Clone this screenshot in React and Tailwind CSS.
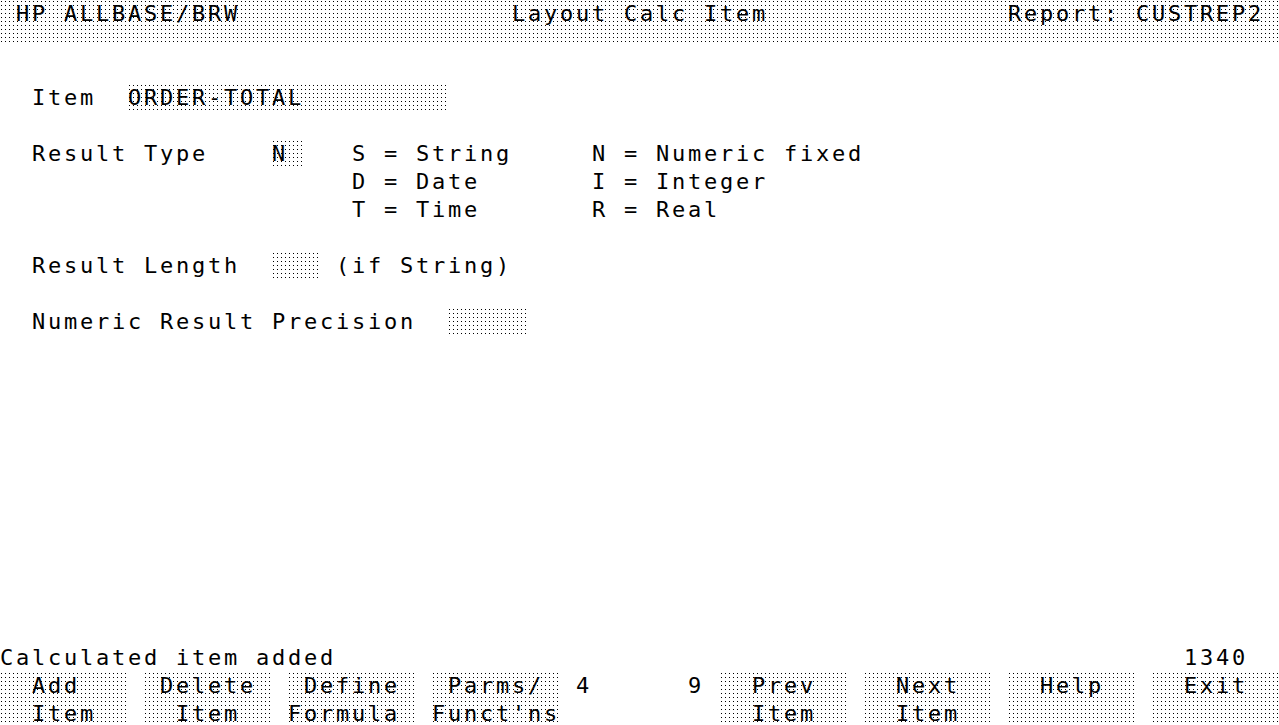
import React from 'react';

// terminal screen: 80 cols x 16px, 26 rows of 28px (last row clipped)
const at = (parts) => {
  let s = '';
  for (const [col, text] of parts) s = s.padEnd(col) + text;
  return s;
};

const dots =
  'bg-[image:conic-gradient(from_270deg_at_1px_1px,#000_90deg,transparent_0)] bg-[length:4px_4px] bg-[position:1px_1px]';

function Field({ children }) {
  return (
    <span className={`inline-block align-top h-[26px] leading-[28px] ${dots}`}>{children}</span>
  );
}

function Row({ children }) {
  return <div className="h-[28px] shrink-0 leading-[28px] whitespace-pre">{children}</div>;
}

function Key({ top, bottom }) {
  return (
    <div className={`w-[128px] h-[56px] shrink-0 whitespace-pre leading-[28px] ${dots}`}>
      <div className="h-[28px]">{top}</div>
      <div className="h-[28px]">{bottom}</div>
    </div>
  );
}

export default function App() {
  return (
    <div className="w-[1279px] h-[725px] overflow-hidden bg-white text-black font-['DejaVu_Sans_Mono','Liberation_Mono',monospace] text-[22px] tracking-[2.755px]">
      <div className="h-[728px] flex flex-col">
        {/* Title band */}
        <div className={`h-[42px] shrink-0 ${dots}`}>
          <Row>{at([[1, 'HP ALLBASE/BRW'], [32, 'Layout Calc Item'], [63, 'Report: CUSTREP2']])}</Row>
        </div>

        <div className="h-[42px] shrink-0" />

        {/* Form */}
        <Row>
          {'  Item  '}
          <Field>{'ORDER-TOTAL         '}</Field>
        </Row>
        <Row />
        <Row>
          {'  Result Type    '}
          <Field>{'N '}</Field>
          {'   S = String     N = Numeric fixed'}
        </Row>
        <Row>{at([[22, 'D = Date'], [37, 'I = Integer']])}</Row>
        <Row>{at([[22, 'T = Time'], [37, 'R = Real']])}</Row>
        <Row />
        <Row>
          {'  Result Length  '}
          <Field>{'   '}</Field>
          {' (if String)'}
        </Row>
        <Row />
        <Row>
          {'  Numeric Result Precision  '}
          <Field>{'     '}</Field>
        </Row>

        <div className="flex-1" />

        {/* Status line */}
        <Row>{at([[0, 'Calculated item added'], [74, '1340']])}</Row>

        {/* Function keys */}
        <div className="h-[56px] shrink-0 flex gap-4">
          <Key top="  Add   " bottom="  Item  " />
          <Key top=" Delete " bottom="  Item  " />
          <Key top=" Define " bottom="Formula " />
          <Key top=" Parms/ " bottom="Funct'ns" />
          <div className="w-[128px] shrink-0 whitespace-pre leading-[28px]">{'4      9'}</div>
          <Key top="  Prev  " bottom="  Item  " />
          <Key top="  Next  " bottom="  Item  " />
          <Key top="  Help  " bottom="" />
          <Key top="  Exit  " bottom="" />
        </div>
      </div>
    </div>
  );
}
